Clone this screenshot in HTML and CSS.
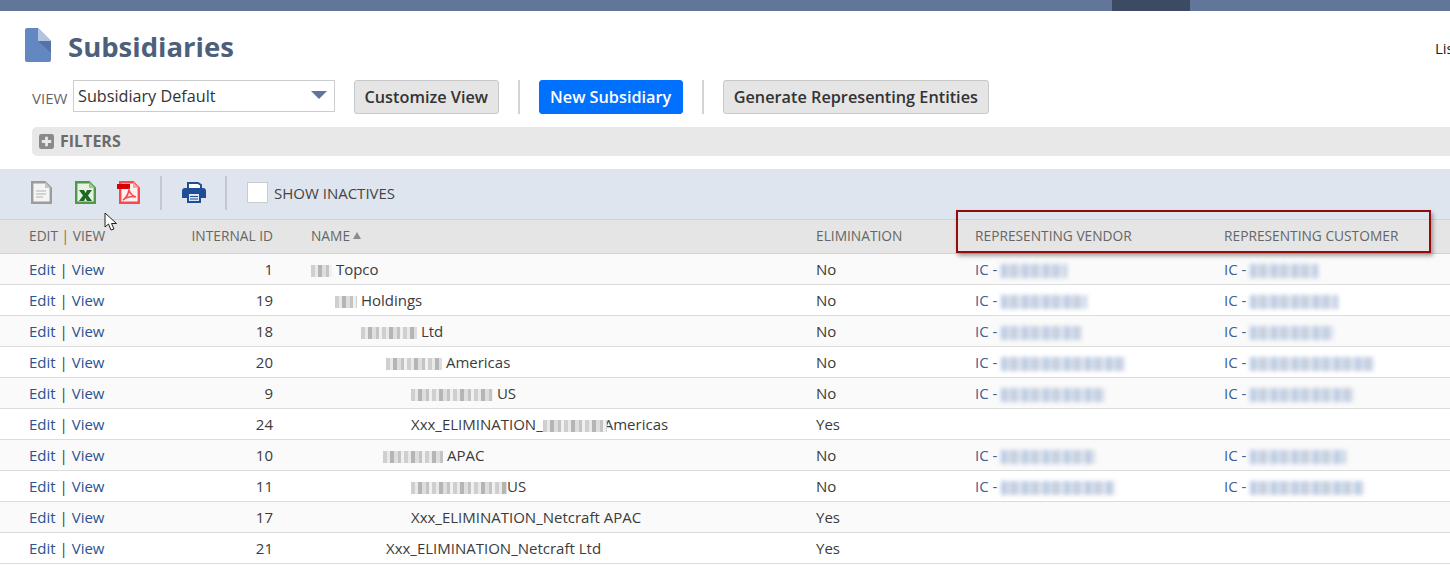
FILE: index.html
```html
<!DOCTYPE html>
<html lang="en">
<head>
<meta charset="utf-8">
<title>Subsidiaries</title>
<link rel="stylesheet" href="styles.css">
</head>
<body>
<div class="topbar"><span class="topbar-active"></span></div>
<header class="title-row">
  <svg class="page-icon" width="26" height="34" viewBox="0 0 26 34"><path d="M2 0H13L26 13V32a2 2 0 0 1-2 2H2a2 2 0 0 1-2-2V2a2 2 0 0 1 2-2z" fill="#6387c1"/><path d="M13 0L26 13H13z" fill="#b3c4e0"/><path d="M13 13H26V25z" fill="#5672a6"/></svg>
  <h1 class="page-title">Subsidiaries</h1>
  <span class="list-link">List</span>
</header>
<div class="view-row">
  <span class="view-label">VIEW</span>
  <div class="select"><span>Subsidiary Default</span><i class="select-arrow"></i></div>
  <button class="btn btn-customize">Customize View</button>
  <span class="btn-sep"></span>
  <button class="btn btn-primary">New Subsidiary</button>
  <span class="btn-sep"></span>
  <button class="btn">Generate Representing Entities</button>
</div>
<div class="filters">
  <svg width="16" height="16" viewBox="0 0 16 16"><rect width="16" height="16" rx="2.5" fill="#8a8a8a"/><path d="M6.5 3h3v3.5H13v3H9.500V13h-3V9.500H3v-3h3.500z" fill="#e8e8e8"/></svg>
  <span>FILTERS</span>
</div>
<div class="toolbar">
  <svg class="tool tool-doc" width="21" height="23" viewBox="0 0 21 23"><path d="M1.200 1.200H14L19.800 7V21.800H1.200z" fill="#f4f4f4" stroke="#9c9c9c" stroke-width="2.400"/><path d="M14 1V7H20z" fill="#c4c4c4"/><path d="M5 10H15M5 13H15M5 16H12" stroke="#c8c8c8" stroke-width="1.500"/></svg>
  <svg class="tool tool-xls" width="21" height="23" viewBox="0 0 21 23"><path d="M1.200 1.200H14L19.800 7V21.800H1.200z" fill="#e9f1e4" stroke="#4f9a46" stroke-width="2.400"/><path d="M14 1V7H20z" fill="#9cc694"/><path d="M4 9H9L10.500 12 12 9H17L13 14.500 17 20H12L10.500 17 9 20H4L8 14.500z" fill="#1d6a22"/></svg>
  <svg class="tool tool-pdf" width="23" height="23" viewBox="0 0 23 23"><path d="M3.200 1.200H16L21.800 7V21.800H3.200z" fill="#fff1f1" stroke="#f9494c" stroke-width="2.400"/><path d="M16 1V7H22z" fill="#fba5a5"/><rect x="0" y="3" width="13" height="5" fill="#d40000"/><path d="M12 9C11 14 8 18 6 19 9 16 15 15 19 16 15 15 13 12 12 9z" fill="none" stroke="#f9494c" stroke-width="1.500"/></svg>
  <span class="tool-sep"></span>
  <svg class="tool tool-print" width="24" height="22" viewBox="0 0 24 22"><path d="M6 1H16L19 3V8H6z" fill="#fff" stroke="#1f4e96" stroke-width="2"/><path d="M3 6H21a3 3 0 0 1 3 3V16H19V21H5V16H0V9a3 3 0 0 1 3-3z" fill="#1f4e96"/><path d="M7 12H17V19H7z" fill="#dfe5ef"/><path d="M8 14.500H16M8 17H16" stroke="#1f4e96" stroke-width="1.200"/></svg>
  <span class="tool-sep tool-sep-second"></span>
  <span class="checkbox"></span>
  <span class="inactive-label">SHOW INACTIVES</span>
</div>
<main class="list">
  <div class="row head">
    <div>EDIT <b class="pipe">|</b> VIEW</div>
    <div class="num">INTERNAL ID</div>
    <div class="name">NAME<i class="sort-arrow"></i></div>
    <div>ELIMINATION</div>
    <div>REPRESENTING VENDOR</div>
    <div>REPRESENTING CUSTOMER</div>
  </div>
  <div class="row odd">
    <div class="links"><a>Edit</a> | <a>View</a></div><div class="num">1</div>
    <div class="name"><i class="mask w21"></i> Topco</div><div>No</div>
    <div class="ic">IC - <i class="soft w66"></i></div><div class="ic">IC - <i class="soft w68"></i></div>
  </div>
  <div class="row">
    <div class="links"><a>Edit</a> | <a>View</a></div><div class="num">19</div>
    <div class="name l1"><i class="mask w22"></i> Holdings</div><div>No</div>
    <div class="ic">IC - <i class="soft w86"></i></div><div class="ic">IC - <i class="soft w88"></i></div>
  </div>
  <div class="row odd">
    <div class="links"><a>Edit</a> | <a>View</a></div><div class="num">18</div>
    <div class="name l2"><i class="mask w56"></i> Ltd</div><div>No</div>
    <div class="ic">IC - <i class="soft w80"></i></div><div class="ic">IC - <i class="soft w84"></i></div>
  </div>
  <div class="row">
    <div class="links"><a>Edit</a> | <a>View</a></div><div class="num">20</div>
    <div class="name l3"><i class="mask w56"></i> Americas</div><div>No</div>
    <div class="ic">IC - <i class="soft w124"></i></div><div class="ic">IC - <i class="soft w124"></i></div>
  </div>
  <div class="row odd">
    <div class="links"><a>Edit</a> | <a>View</a></div><div class="num">9</div>
    <div class="name l4"><i class="mask w82"></i> US</div><div>No</div>
    <div class="ic">IC - <i class="soft w104"></i></div><div class="ic">IC - <i class="soft w104"></i></div>
  </div>
  <div class="row">
    <div class="links"><a>Edit</a> | <a>View</a></div><div class="num">24</div>
    <div class="name l4">Xxx_ELIMINATION_<i class="mask w64 over"></i>Americas</div><div>Yes</div>
    <div></div><div></div>
  </div>
  <div class="row odd">
    <div class="links"><a>Edit</a> | <a>View</a></div><div class="num">10</div>
    <div class="name l3"><i class="mask w60 shift"></i> APAC</div><div>No</div>
    <div class="ic">IC - <i class="soft w94"></i></div><div class="ic">IC - <i class="soft w96"></i></div>
  </div>
  <div class="row">
    <div class="links"><a>Edit</a> | <a>View</a></div><div class="num">11</div>
    <div class="name l4"><i class="mask w96"></i>US</div><div>No</div>
    <div class="ic">IC - <i class="soft w114"></i></div><div class="ic">IC - <i class="soft w114"></i></div>
  </div>
  <div class="row odd">
    <div class="links"><a>Edit</a> | <a>View</a></div><div class="num">17</div>
    <div class="name l4">Xxx_ELIMINATION_Netcraft APAC</div><div>Yes</div>
    <div></div><div></div>
  </div>
  <div class="row">
    <div class="links"><a>Edit</a> | <a>View</a></div><div class="num">21</div>
    <div class="name l3">Xxx_ELIMINATION_Netcraft Ltd</div><div>Yes</div>
    <div></div><div></div>
  </div>
</main>
<div class="highlight"></div>
<svg class="cursor" width="14" height="20" viewBox="0 0 14 20"><path d="M1 1V15L4.500 12 7 18 10 17 7.500 11.500H12.500z" fill="#fff" stroke="#222" stroke-width="1"/></svg>
</body>
</html>
```
FILE: styles.css
```css
* { box-sizing: border-box; }
html, body { margin: 0; height: 565px; overflow: hidden; }
body { font-family: "Open Sans", "Noto Sans", sans-serif; font-size: 15px; color: #333; background: #fff; position: relative; }

.topbar { height: 11px; background: #627699; padding-left: 1112px; }
.topbar-active { display: block; width: 78px; height: 11px; background: #3c4a63; }

.title-row { display: flex; align-items: center; height: 69px; padding: 0 0 1px 25px; }
.page-icon { flex: none; }
.page-title { margin: 4px 0 0 17px; font-size: 27.500px; font-weight: 700; color: #4d5f7b; line-height: 36px; }
.list-link { margin: 6px 0 0 auto; width: 15px; flex: none; font-size: 15px; color: #222; white-space: nowrap; }

.view-row { display: flex; align-items: flex-start; height: 34px; padding-left: 32px; margin-bottom: 13px; }
.view-label { width: 41px; font-size: 15px; color: #666; line-height: 36px; }
.select { display: flex; align-items: center; justify-content: space-between; width: 262px; height: 32px; border: 1px solid #ccc; padding: 0 7px 1px 4px; font-size: 16.200px; color: #333; background: #fff; }
.select-arrow { width: 0; height: 0; border-left: 8px solid transparent; border-right: 8px solid transparent; border-top: 8px solid #5f7599; margin-bottom: 1px; }
.btn { height: 34px; padding: 0 10px; border: 1px solid #c8c8c8; border-radius: 3px; background: #e5e5e5; font: 600 16.250px/1 "Open Sans", sans-serif; color: #333; white-space: nowrap; }
.btn-customize { margin-left: 19px; padding: 0 9.500px; }
.btn-primary { padding: 0 10.500px; background: #0070ff; border-color: #0070ff; color: #fff; }
.btn-sep { width: 2px; height: 34px; background: #d4d4d4; margin: 0 19px; }

.filters { display: flex; align-items: center; gap: 6px; height: 29px; margin-left: 32px; padding: 0 0 1px 7px; background: #e8e8e8; border-radius: 5px 0 0 5px; font-size: 16px; font-weight: 700; color: #6b6b6b; }
.filters svg { width: 15px; height: 15px; }

.toolbar { display: flex; align-items: center; height: 50px; margin-top: 13px; padding: 0 0 3px 31px; background: #dfe5ef; }
.tool { flex: none; }
.tool-xls { margin-left: 23px; }
.tool-pdf { margin-left: 21px; }
.tool-sep { flex: none; width: 2px; height: 34px; background: #c3c8d0; margin-left: 20px; }
.tool-print { margin-left: 20px; }
.tool-sep-second { margin-left: 19px; }
.checkbox { flex: none; width: 21px; height: 21px; margin-left: 20px; background: #fff; border: 1px solid #ccc; }
.inactive-label { margin-left: 6px; color: #444; font-size: 15px; }

.row { display: grid; grid-template-columns: 100px 144px 543px 159px 249px 1fr; align-items: center; height: 31px; padding: 0 0 1px 29px; border-bottom: 1px solid #dcdcdc; background: #fff; white-space: nowrap; color: #3b3b3b; }
.row.odd { background: #fafafa; }
.row.head { height: 35px; padding-bottom: 2px; background: #e5e5e5; border-top: 1px solid #d2d2d2; border-bottom: 1px solid #d2d2d2; font-size: 13.750px; color: #666; }
.pipe { font-weight: 400; color: #8a6d4a; }
.num { text-align: right; }
.links a { color: #2c5390; }
.links { color: #3b3b3b; }
.ic { color: #3f5f92; }
.name { padding-left: 38px; }
.l1 { padding-left: 62px; }
.l2 { padding-left: 88px; }
.l3 { padding-left: 113px; }
.l4 { padding-left: 138px; }
.sort-arrow { display: inline-block; width: 0; height: 0; margin: 0 0 2px 3px; border-left: 4px solid transparent; border-right: 4px solid transparent; border-bottom: 7px solid #8c8c8c; }

.mask, .soft { display: inline-block; vertical-align: -2px; }
.mask { height: 12px; filter: blur(.5px); background: repeating-linear-gradient(90deg, #cfcfcf 0 4px, #e9e9e9 4px 7px, #b5b5b5 7px 11px, #dedede 11px 15px, #c4c4c4 15px 18px, #f0f0f0 18px 21px); }
.shift { margin-left: -3px; }
.over { margin-right: -3px; }
.soft { height: 14px; vertical-align: -3px; filter: blur(2px); background: repeating-linear-gradient(90deg, #bccbe3 0 6px, #dfe5ef 6px 9px, #c6d0e0 9px 17px, #e4e8f0 17px 21px); }
.w21 { width: 21px; } .w22 { width: 22px; } .w56 { width: 56px; } .w60 { width: 60px; } .w64 { width: 64px; } .w82 { width: 82px; } .w96 { width: 96px; }
.w66 { width: 66px; } .w68 { width: 68px; } .w80 { width: 80px; } .w84 { width: 84px; } .w86 { width: 86px; } .w88 { width: 88px; } .w94 { width: 94px; } .w104 { width: 104px; } .w114 { width: 114px; } .w124 { width: 124px; }

.highlight { position: absolute; left: 956px; top: 210px; width: 475px; height: 43px; border: 2px solid #950b0b; box-shadow: 2px 3px 4px rgba(60, 60, 60, .45); }
.cursor { position: absolute; left: 104px; top: 212px; }
```
